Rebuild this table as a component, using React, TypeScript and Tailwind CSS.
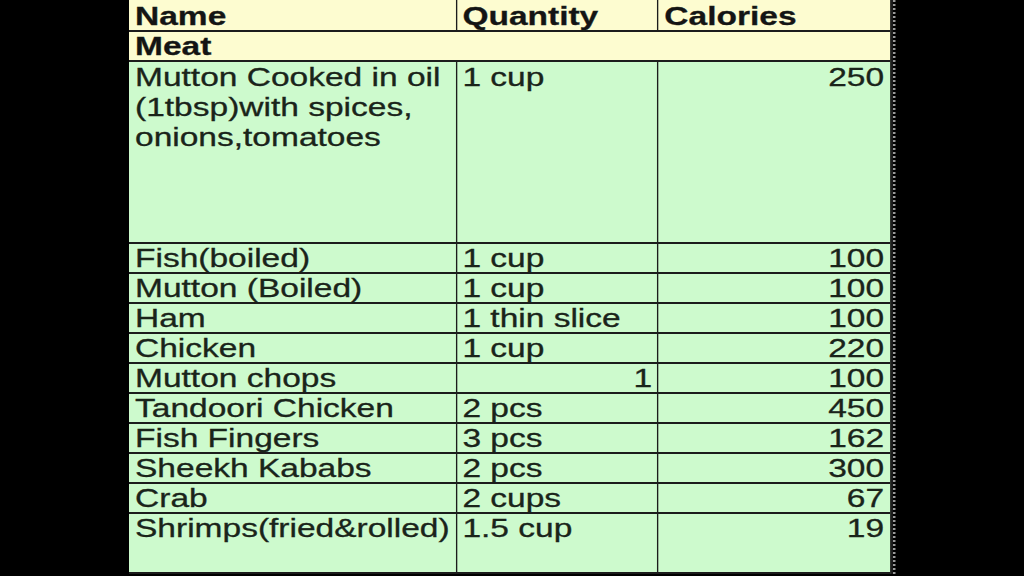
type Row = { name: string; qty: string; cal: string; qtyRight?: boolean };

const rows: Row[] = [
  { name: 'Fish(boiled)', qty: '1 cup', cal: '100' },
  { name: 'Mutton (Boiled)', qty: '1 cup', cal: '100' },
  { name: 'Ham', qty: '1 thin slice', cal: '100' },
  { name: 'Chicken', qty: '1 cup', cal: '220' },
  { name: 'Mutton chops', qty: '1', cal: '100', qtyRight: true },
  { name: 'Tandoori Chicken', qty: '2 pcs', cal: '450' },
  { name: 'Fish Fingers', qty: '3 pcs', cal: '162' },
  { name: 'Sheekh Kababs', qty: '2 pcs', cal: '300' },
  { name: 'Crab', qty: '2 cups', cal: '67' },
];

const App = () => {
  return (
    <div
      className="w-[1024px] h-[576px] bg-black overflow-hidden pl-[129px] text-[25px] text-[#1a241a] [-webkit-text-stroke:0.3px_#1a241a]"
      style={{ fontFamily: '"Liberation Sans", Arial, sans-serif' }}
    >
      {/* the slide is stretched sideways, so the table is drawn narrow and widened */}
      <div className="w-[572px] origin-top-left scale-x-[1.34] border-r-[2px] border-dotted border-[#9a9a9a]">
        <div className="border-r-2 border-[#1c1c1c]">
          {/* header */}
          <div className="grid grid-cols-[244.8px_150.7px_173px] h-[30px] bg-[#fdfcd0] font-bold text-[#141414] leading-[30px]">
            <div className="pl-[4.5px] pt-[1px] border-r-[1.75px] border-[#1c1c1c]">Name</div>
            <div className="pl-[4px] pt-[1px] border-r-[1.75px] border-[#1c1c1c]">Quantity</div>
            <div className="pl-[4px] pt-[1px]">Calories</div>
          </div>

          {/* category */}
          <div className="h-[30px] border-t-2 border-[#1c1c1c] bg-[#fdfcd0] font-bold text-[#141414] leading-[28px] pl-[4.5px]">
            Meat
          </div>

          {/* first entry, three lines tall */}
          <div className="grid grid-cols-[244.8px_150.7px_173px] h-[182px] border-t-2 border-[#1c1c1c] bg-[#cdfacd] leading-[30px]">
            <div className="pl-[4.5px] border-r-[1.75px] border-[#1c1c1c]">
              Mutton Cooked in oil
              <br />
              (1tbsp)with spices,
              <br />
              onions,tomatoes
            </div>
            <div className="pl-[4px] border-r-[1.75px] border-[#1c1c1c]">1 cup</div>
            <div className="pr-[5px] text-right">250</div>
          </div>

          {rows.map((r) => (
            <div
              key={r.name}
              className="grid grid-cols-[244.8px_150.7px_173px] h-[30px] border-t-2 border-[#1c1c1c] bg-[#cdfacd] leading-[28px]"
            >
              <div className="pl-[4.5px] border-r-[1.75px] border-[#1c1c1c] whitespace-nowrap">{r.name}</div>
              <div
                className={
                  r.qtyRight
                    ? 'pr-[4px] text-right border-r-[1.75px] border-[#1c1c1c]'
                    : 'pl-[4px] border-r-[1.75px] border-[#1c1c1c] whitespace-nowrap'
                }
              >
                {r.qty}
              </div>
              <div className="pr-[5px] text-right">{r.cal}</div>
            </div>
          ))}

          {/* last entry, taller cell */}
          <div className="grid grid-cols-[244.8px_150.7px_173px] h-[62px] border-y-2 border-[#1c1c1c] bg-[#cdfacd] leading-[28px]">
            <div className="pl-[4.5px] border-r-[1.75px] border-[#1c1c1c] whitespace-nowrap">Shrimps(fried&amp;rolled)</div>
            <div className="pl-[4px] border-r-[1.75px] border-[#1c1c1c]">1.5 cup</div>
            <div className="pr-[5px] text-right">19</div>
          </div>
        </div>
      </div>
    </div>
  );
};

export default App;
